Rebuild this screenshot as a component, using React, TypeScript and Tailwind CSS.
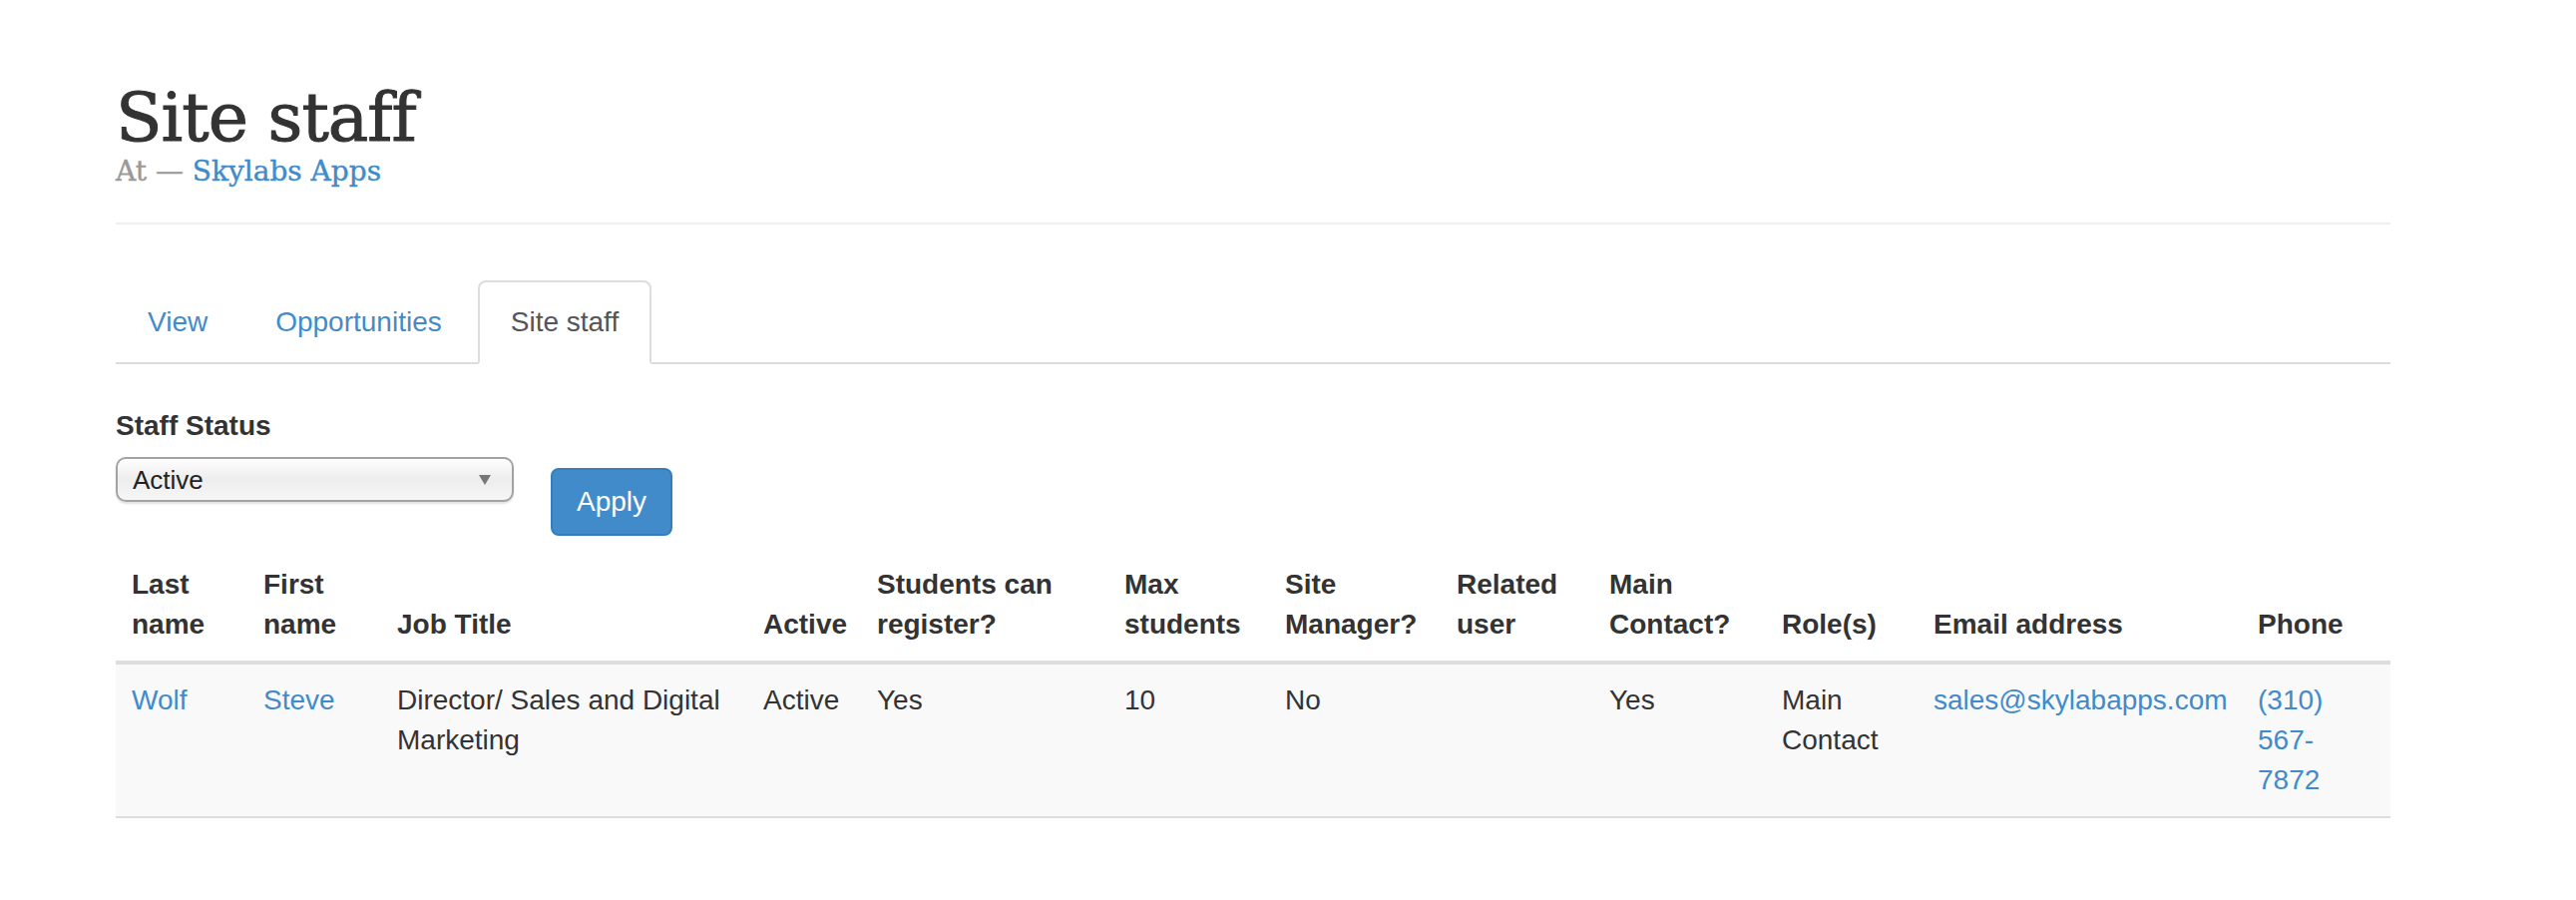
import React from 'react';

const link = 'text-[#428bca]';

const columns: { label: string; width: number }[] = [
  { label: 'Last name', width: 132 },
  { label: 'First name', width: 134 },
  { label: 'Job Title', width: 367 },
  { label: 'Active', width: 114 },
  { label: 'Students can register?', width: 248 },
  { label: 'Max students', width: 161 },
  { label: 'Site Manager?', width: 172 },
  { label: 'Related user', width: 153 },
  { label: 'Main Contact?', width: 173 },
  { label: 'Role(s)', width: 152 },
  { label: 'Email address', width: 325 },
  { label: 'Phone', width: 149 },
];

const Tabs: React.FC = () => (
  <ul className="flex border-b-2 border-[#ddd] mt-[56px]">
    <li className="mr-[4px]">
      <a className={`block px-[32px] pt-[22px] pb-[20px] leading-[40px] ${link}`}>View</a>
    </li>
    <li className="mr-[4px]">
      <a className={`block px-[32px] pt-[22px] pb-[20px] leading-[40px] ${link}`}>Opportunities</a>
    </li>
    <li className="-mb-[2px]">
      <a className="block px-[31px] pt-[20px] pb-[20px] leading-[40px] text-[#555] bg-white border-2 border-[#ddd] border-b-transparent rounded-t-[8px]">
        Site staff
      </a>
    </li>
  </ul>
);

const Filter: React.FC = () => (
  <div className="flex items-start mt-[42px]">
    <div>
      <div className="font-bold leading-[40px] text-[#333]">Staff Status</div>
      <div className="mt-[11px] w-[399px] h-[45px] flex items-center justify-between pl-[15px] pr-[21px] border-2 border-[#a3a3a3] rounded-[10px] bg-gradient-to-b from-[#fefefe] via-[#ededed] to-[#f7f7f7] shadow-[0_2px_2px_rgba(0,0,0,0.12)]">
        <span className="text-[26px] text-[#222] leading-none">Active</span>
        <svg width="12" height="10" viewBox="0 0 12 10">
          <path d="M0 0 L12 0 L6 10 Z" fill="#777" />
        </svg>
      </div>
    </div>
    <button className="ml-[37px] mt-[62px] px-[24px] py-[12px] leading-[40px] text-white bg-[#428bca] border-2 border-[#357ebd] rounded-[8px]">
      Apply
    </button>
  </div>
);

const StaffTable: React.FC = () => (
  <table className="table-fixed w-[2280px] mt-[13px] border-collapse">
    <colgroup>
      {columns.map((c) => (
        <col key={c.label} style={{ width: c.width }} />
      ))}
    </colgroup>
    <thead>
      <tr>
        {columns.map((c) => (
          <th
            key={c.label}
            className="p-[16px] text-left align-bottom font-bold leading-[40px] text-[#333] border-b-4 border-[#ddd]"
          >
            {c.label}
          </th>
        ))}
      </tr>
    </thead>
    <tbody>
      <tr className="bg-[#f9f9f9] border-b-2 border-[#ddd] align-top leading-[40px]">
        <td className="p-[16px]"><a className={link}>Wolf</a></td>
        <td className="p-[16px]"><a className={link}>Steve</a></td>
        <td className="p-[16px]">Director/ Sales and Digital Marketing</td>
        <td className="p-[16px]">Active</td>
        <td className="p-[16px]">Yes</td>
        <td className="p-[16px]">10</td>
        <td className="p-[16px]">No</td>
        <td className="p-[16px]"></td>
        <td className="p-[16px]">Yes</td>
        <td className="p-[16px]">Main Contact</td>
        <td className="p-[16px]"><a className={link}>sales@skylabapps.com</a></td>
        <td className="p-[16px]">
          <a className={`block max-w-[100px] ${link}`}>
            (310) 567-<wbr />7872
          </a>
        </td>
      </tr>
    </tbody>
  </table>
);

const App: React.FC = () => {
  return (
    <div className="min-h-[902px] bg-white text-[#333] text-[28px] font-['Liberation_Sans',Arial,sans-serif]">
      <div className="ml-[116px] w-[2280px] pt-[81px]">
        {/* Page header */}
        <div className="border-b-2 border-[#eee] pb-[34px] font-['DejaVu_Serif',serif]">
          <h1 className="text-[68px] leading-[74px] text-[#333] tracking-[-1px] [-webkit-text-stroke:1px_#333]">
            Site staff
          </h1>
          <div className="text-[28px] leading-[34px] [-webkit-text-stroke:0.4px_currentColor]">
            <span className="text-[#999]">At — </span>
            <a className={link}>Skylabs Apps</a>
          </div>
        </div>

        <Tabs />
        <Filter />
        <StaffTable />
      </div>
    </div>
  );
};

export default App;
